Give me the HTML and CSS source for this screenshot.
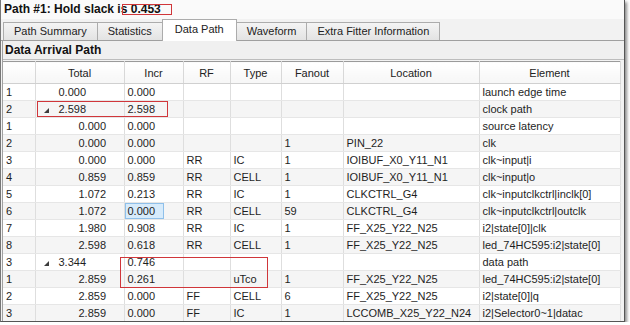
FILE: index.html
```html
<!DOCTYPE html>
<html lang="en">
<head>
    <meta charset="UTF-8">
    <title>Path #1: Hold slack</title>
    <link rel="stylesheet" href="styles.css">
</head>
<body>
    <div class="window">
        <div class="title">Path #1: Hold slack is 0.453</div>
        <div class="tabs">
            <div class="tab">Path Summary</div>
            <div class="tab">Statistics</div>
            <div class="tab active">Data Path</div>
            <div class="tab">Waveform</div>
            <div class="tab">Extra Fitter Information</div>
        </div>
        <div class="panel">
            <div class="panel-head">Data Arrival Path</div>
            <table class="grid">
                <colgroup>
                    <col class="c-num"><col class="c-total"><col class="c-incr"><col class="c-rf">
                    <col class="c-type"><col class="c-fan"><col class="c-loc"><col class="c-elem">
                </colgroup>
                <thead>
                    <tr><th></th><th>Total</th><th>Incr</th><th>RF</th><th>Type</th><th>Fanout</th><th>Location</th><th>Element</th></tr>
                </thead>
                <tbody>
                    <tr><td>1</td><td class="total">0.000</td><td>0.000</td><td></td><td></td><td></td><td></td><td>launch edge time</td></tr>
                    <tr><td>2</td><td class="total"><span class="twisty"></span>2.598</td><td>2.598</td><td></td><td></td><td></td><td></td><td>clock path</td></tr>
                    <tr><td>1</td><td class="total child">0.000</td><td>0.000</td><td></td><td></td><td></td><td></td><td>source latency</td></tr>
                    <tr><td>2</td><td class="total child">0.000</td><td>0.000</td><td></td><td></td><td>1</td><td>PIN_22</td><td>clk</td></tr>
                    <tr><td>3</td><td class="total child">0.000</td><td>0.000</td><td>RR</td><td>IC</td><td>1</td><td>IOIBUF_X0_Y11_N1</td><td>clk~input|i</td></tr>
                    <tr><td>4</td><td class="total child">0.859</td><td>0.859</td><td>RR</td><td>CELL</td><td>1</td><td>IOIBUF_X0_Y11_N1</td><td>clk~input|o</td></tr>
                    <tr><td>5</td><td class="total child">1.072</td><td>0.213</td><td>RR</td><td>IC</td><td>1</td><td>CLKCTRL_G4</td><td>clk~inputclkctrl|inclk[0]</td></tr>
                    <tr><td>6</td><td class="total child">1.072</td><td><span class="selected">0.000</span></td><td>RR</td><td>CELL</td><td>59</td><td>CLKCTRL_G4</td><td>clk~inputclkctrl|outclk</td></tr>
                    <tr><td>7</td><td class="total child">1.980</td><td>0.908</td><td>RR</td><td>IC</td><td>1</td><td>FF_X25_Y22_N25</td><td>i2|state[0]|clk</td></tr>
                    <tr><td>8</td><td class="total child">2.598</td><td>0.618</td><td>RR</td><td>CELL</td><td>1</td><td>FF_X25_Y22_N25</td><td>led_74HC595:i2|state[0]</td></tr>
                    <tr><td>3</td><td class="total"><span class="twisty"></span>3.344</td><td>0.746</td><td></td><td></td><td></td><td></td><td>data path</td></tr>
                    <tr><td>1</td><td class="total child">2.859</td><td>0.261</td><td></td><td>uTco</td><td>1</td><td>FF_X25_Y22_N25</td><td>led_74HC595:i2|state[0]</td></tr>
                    <tr><td>2</td><td class="total child">2.859</td><td>0.000</td><td>FF</td><td>CELL</td><td>6</td><td>FF_X25_Y22_N25</td><td>i2|state[0]|q</td></tr>
                    <tr><td>3</td><td class="total child">2.859</td><td>0.000</td><td>FF</td><td>IC</td><td>1</td><td>LCCOMB_X25_Y22_N24</td><td>i2|Selector0~1|datac</td></tr>
                </tbody>
            </table>
        </div>

        <!-- red annotation boxes drawn over the screenshot -->
        <div class="mark mark-slack"></div>
        <div class="mark mark-clock"></div>
        <div class="mark mark-data"></div>
    </div>
</body>
</html>
```

FILE: styles.css
```css
body {
    margin: 0;
    background-color: #fff;
    font-family: "Liberation Sans", Arial, sans-serif;
    font-size: 11px;
    color: #1e1e1e;
}
.window {
    position: relative;
    width: 623px;
    height: 321px;
    border-left: 1px solid #777;
    border-right: 1px solid #555;
    border-bottom: 1px solid #555;
    background-color: #f2f2f2;
    overflow: hidden;
    box-shadow: 2px 2px 3px rgba(0, 0, 0, 0.45);
}
.title {
    height: 19px;
    line-height: 18px;
    padding-left: 3px;
    font-size: 12px;
    font-weight: bold;
    color: #111;
    background-color: #fafafa;
}
.tabs {
    display: flex;
    align-items: flex-end;
    height: 21px;
    padding-left: 2px;
    border-bottom: 1px solid #a0a0a0;
}
.tab {
    height: 17px;
    line-height: 17px;
    padding: 0 10px;
    margin-right: -1px;
    border: 1px solid #acacac;
    border-bottom: none;
    background: linear-gradient(#f4f4f4, #e3e3e3);
    color: #222;
}
.tab.active {
    position: relative;
    height: 21px;
    line-height: 19px;
    margin-bottom: -1px;
    padding: 0 12px;
    background: #fff;
    z-index: 1;
}
.panel {
    margin-left: 1px;
    border-left: 1px solid #a0a0a0;
}
.panel-head {
    height: 18px;
    line-height: 18px;
    padding-left: 2px;
    font-size: 12px;
    font-weight: bold;
    color: #111;
    background-color: #f0f0f0;
    border-bottom: 1px solid #bdbdbd;
}
.grid {
    width: 617px;
    margin-top: 1px;
    border-collapse: collapse;
    table-layout: fixed;
    background-color: #fff;
    border-top: 1px solid #9a9a9a;
}
.c-num { width: 32px; }
.c-total { width: 89px; }
.c-incr { width: 59px; }
.c-rf { width: 47px; }
.c-type { width: 51px; }
.c-fan { width: 62px; }
.c-loc { width: 136px; }
.c-elem { width: 141px; }
.grid th {
    height: 21px;
    padding: 0;
    font-weight: normal;
    text-align: center;
    color: #222;
    background: linear-gradient(#fff, #f6f6f6);
    border-right: 1px solid #d8d8d8;
    border-bottom: 1px solid #d0d0d0;
}
.grid td {
    height: 16px;
    padding: 0 0 0 3px;
    line-height: 16px;
    white-space: nowrap;
    overflow: hidden;
    border-right: 1px solid #dedede;
    border-bottom: 1px solid #e6e6e6;
}
.grid tbody tr:nth-child(even) td {
    background-color: #f5f5f5;
}
.grid td.total {
    padding-left: 23px;
}
.grid td.total.child {
    padding-left: 43px;
}
.twisty {
    display: inline-block;
    width: 0;
    height: 0;
    margin-left: -15px;
    margin-right: 10px;
    vertical-align: 0;
    border-left: 5px solid transparent;
    border-bottom: 5px solid #3c3c3c;
}
.selected {
    display: inline-block;
    width: 35px;
    height: 14px;
    line-height: 14px;
    margin-left: -3px;
    padding-left: 2px;
    border: 1px solid #8fc0ea;
    background-color: #d7ebfb;
}
.mark {
    position: absolute;
    border: 1px solid #d0363a;
}
.mark-slack {
    left: 121px;
    top: 4px;
    width: 48px;
    height: 9px;
}
.mark-clock {
    left: 36px;
    top: 101px;
    width: 129px;
    height: 14px;
}
.mark-data {
    left: 119px;
    top: 257px;
    width: 146px;
    height: 29px;
}
```
